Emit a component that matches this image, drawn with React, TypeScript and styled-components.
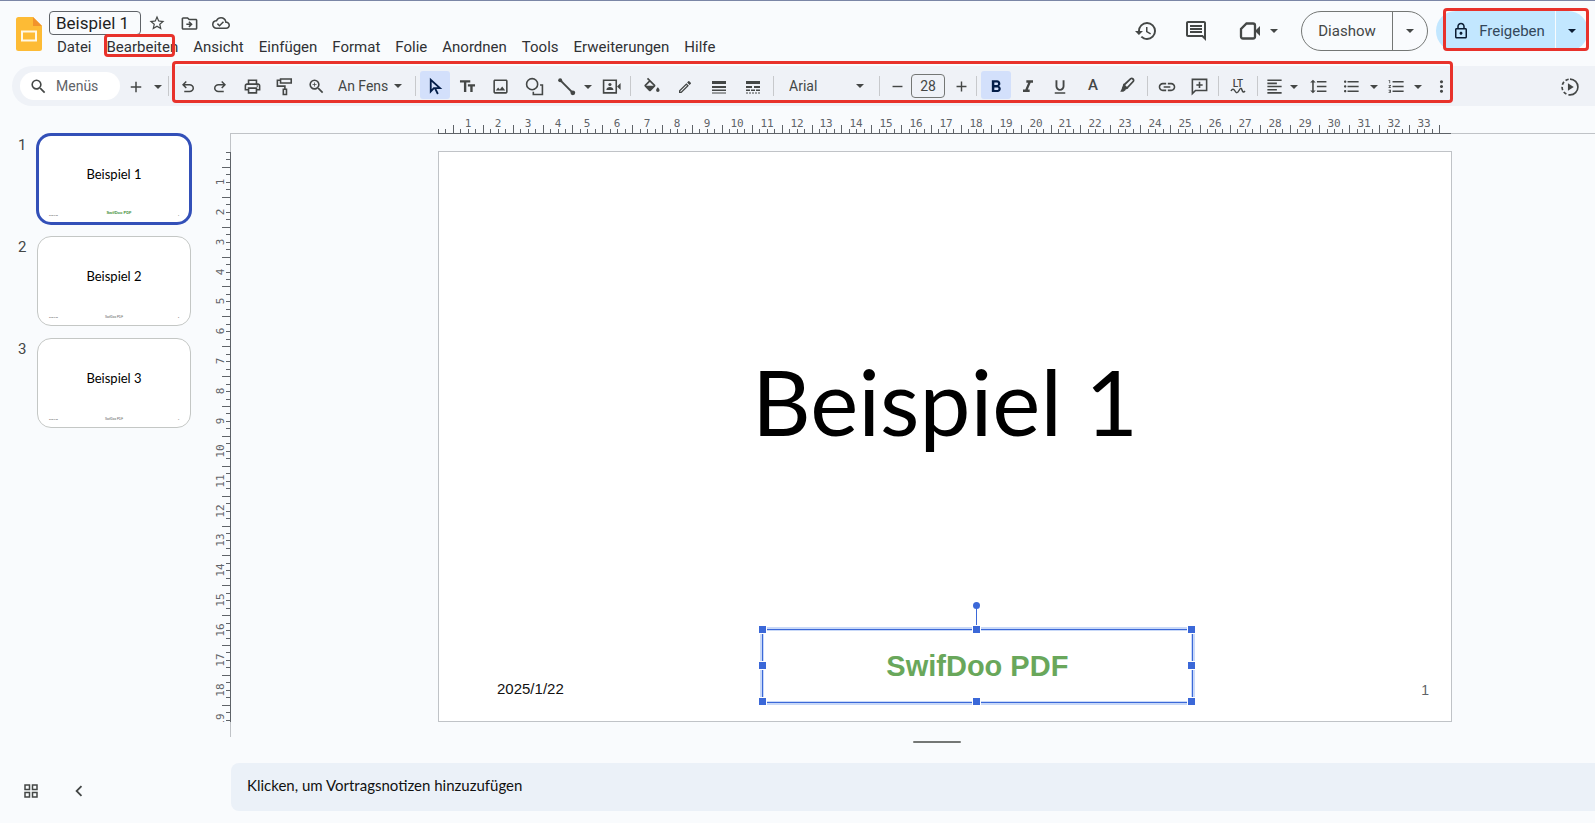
import React from 'react';
import styled, { createGlobalStyle, css } from 'styled-components';
import {
  MdStarBorder, MdOutlineDriveFileMove, MdOutlineCloudDone, MdHistory, MdOutlineInsertComment,
  MdOutlinePrint, MdZoomIn, MdOutlineImage, MdOutlineEdit, MdFormatItalic, MdFormatUnderlined,
  MdFormatBold, MdLink, MdFormatAlignLeft, MdFormatLineSpacing, MdFormatListBulleted,
  MdFormatListNumbered, MdMoreVert, MdSearch, MdAdd, MdRemove, MdOutlineLock, MdChevronLeft,
  MdGridView, MdTextFields,
} from 'react-icons/md';

const UI = 'Roboto, "Liberation Sans", sans-serif';
const DOC = 'Lato, "Open Sans", sans-serif';
const INK = '#444746';
const BLUE = '#3b68d8';

const Global = createGlobalStyle`
  *, *::before, *::after { box-sizing: border-box; }
  html, body { margin: 0; background: #f9fbfd; }
  body { font-family: ${UI}; color: ${INK}; }
  button, input, select { font: inherit; color: inherit; margin: 0; padding: 0; border: 0; background: none; }
  button { cursor: pointer; }
  svg { display: block; flex: none; }
`;

/* ---------- icons ---------- */

type SvgProps = { size?: number; children: React.ReactNode; box?: string };
const Stroke = ({ size = 19, children, box = '0 0 24 24' }: SvgProps) => (
  <svg width={size} height={size} viewBox={box} fill="none" stroke="currentColor" strokeWidth="2" aria-hidden="true">
    {children}
  </svg>
);
const Caret = () => (
  <svg width="8" height="4" viewBox="0 0 8 4" fill="currentColor" aria-hidden="true"><path d="M0 0h8L4 4z" /></svg>
);
const Undo = ({ flip = false }: { flip?: boolean }) => (
  <svg width="18" height="18" viewBox="0 -960 960 960" fill="currentColor" aria-hidden="true">
    <path
      transform={flip ? 'translate(960 0) scale(-1 1)' : undefined}
      d="M280-200v-80h284q63 0 109.500-40T720-420q0-60-46.500-100T564-560H312l104 104-56 56-200-200 200-200 56 56-104 104h252q97 0 167 63t70 157q0 94-70 157t-167 63H280Z"
    />
  </svg>
);
const PaintRoller = () => (
  <Stroke><path d="M7 2.500h13.500v5H7zM7 4H3v7.500h9.500V15M10.500 15.500h4V22h-4z" /></Stroke>
);
const Pointer = () => (
  <Stroke><path d="M6 3.500v14.800l4-4.300h7.600zM11 13.500l4 8" strokeWidth="2.300" /></Stroke>
);
const Shapes = () => (
  <Stroke><circle cx="9" cy="9" r="7" /><path d="M19 10h3v12H10.500v-3.500" /></Stroke>
);
const Line = () => (
  <Stroke>
    <path d="M4 4l16 16" strokeWidth="2.500" />
    <circle cx="4" cy="4" r="2.500" fill="currentColor" stroke="none" />
    <circle cx="20" cy="20" r="3" fill="currentColor" stroke="none" />
  </Stroke>
);
const Speaker = () => (
  <Stroke>
    <path d="M2 4h16v16H2z" />
    <circle cx="10" cy="9.500" r="2" fill="currentColor" stroke="none" />
    <path d="M5.500 16.500c0-5 9-5 9 0zM19 12l4.500-4.500v9z" fill="currentColor" stroke="none" />
  </Stroke>
);
const Bucket = () => (
  <svg width="19" height="19" viewBox="0 -1 24 24" fill="currentColor" aria-hidden="true">
    <path d="M16.560 8.940L7.620 0 6.210 1.410l2.380 2.380-5.150 5.150a1.490 1.490 0 000 2.120l5.500 5.500c.29.29.68.44 1.060.44s.77-.15 1.060-.44l5.500-5.500c.59-.58.59-1.530 0-2.120zM5.210 10L10 5.210 14.790 10zM20 12s-2.200 2.300-2.200 3.800a2.200 2.200 0 004.400 0C22.200 14.300 20 12 20 12z" />
  </svg>
);
const Weight = () => (
  <svg width="14" height="14" viewBox="0 0 14 14" fill="currentColor" aria-hidden="true">
    <path d="M0 1h14v3H0zM0 6h14v2H0zM0 9.500h14V11H0zM0 12.500h14v1H0z" />
  </svg>
);
const Dashes = () => (
  <svg width="14" height="14" viewBox="0 0 14 14" fill="currentColor" aria-hidden="true">
    <path d="M0 1h14v3H0zM0 6h6v2H0zM8 6h6v2H8zM0 9.500h4V11H0zM5 9.500h4V11H5zM10 9.500h4V11h-4zM0 12.500h2v1H0zM3 12.500h2v1H3zM6 12.500h2v1H6zM9 12.500h2v1H9zM12 12.500h2v1h-2z" />
  </svg>
);
const Marker = () => (
  <Stroke size={18}>
    <path d="M3 21l3-6 4 4-3 2z" fill="currentColor" stroke="none" />
    <path d="M8 12L17 3.500q1.500-1 3 .5t.5 3L12 16l-4 1.500-1.500-1.500z" strokeWidth="2.400" />
    <path d="M8 12l4 4-5 2z" fill="currentColor" />
  </Stroke>
);
const AddComment = () => (
  <Stroke><path d="M3 3h18v14H7l-4 4zM12 6v8M8 10h8" /></Stroke>
);
const Meet = () => (
  <Stroke size={24}>
    <path d="M8.500 4.500H15q2 0 2 2v11q0 2-2 2H5q-2 0-2-2V10z" strokeWidth="2.300" />
    <path d="M17 12l5-5v10z" fill="currentColor" stroke="none" />
  </Stroke>
);
const LanguageTool = () => (
  <svg width="18" height="18" viewBox="0 0 18 18" fill="none" stroke="currentColor" aria-hidden="true">
    <text x="9" y="9" textAnchor="middle" fontFamily={UI} fontWeight="500" fontSize="10" fill="currentColor" stroke="none">LT</text>
    <path d="M2 13q2-3.500 4 0t4-.5 3-.5 3 1" strokeWidth="1.500" />
  </svg>
);
const Motion = () => (
  <Stroke size={20}>
    <path d="M12 2.500a9.500 9.500 0 010 19" />
    <path d="M12 21.500a9.500 9.500 0 010-19" strokeDasharray="4 2.500" strokeDashoffset="2" />
    <path d="M9.500 7.500v9l7-4.500z" fill="currentColor" stroke="none" />
  </Stroke>
);
const Logo = () => (
  <svg width="26" height="34" viewBox="0 0 26 34" role="img" aria-label="Präsentationen">
    <path d="M2.500 0H17l9 9v22.500q0 2.500-2.500 2.500h-21Q0 34 0 31.500v-29Q0 0 2.500 0z" fill="#fdbb35" />
    <path d="M17 0l9 9h-9z" fill="#f2932b" />
    <path d="M6 14.500h14v9H6z" fill="none" stroke="#fff8e6" strokeWidth="2" />
  </svg>
);

/* ---------- header ---------- */

const Page = styled.div`
  display: flex;
  flex-direction: column;
  min-height: 100vh;
  overflow: hidden;
  border-top: 1px solid #7b86a6;
`;
const Header = styled.header`
  display: flex;
  height: 65px;
  padding: 10px 7px 0 16px;
`;
const LogoLink = styled.a`
  display: block;
  margin: 6px 7px 0 0;
`;
const TitleBlock = styled.div`
  display: flex;
  flex-direction: column;
  gap: 3px;
  flex: 1;
`;
const TitleRow = styled.div`
  display: flex;
  align-items: center;
`;
const TitleInput = styled.input`
  width: 92px;
  height: 24px;
  padding: 0 6px;
  border: 1px solid #5f6368;
  border-radius: 4px;
  font-size: 17px;
  color: #1f1f1f;
`;
const IconButton = styled.button<{ $w: number }>`
  display: flex;
  align-items: center;
  justify-content: center;
  width: ${p => p.$w}px;
  height: 24px;
`;
const MenuBar = styled.nav`
  display: flex;
  gap: 1px;
  padding-left: 1px;
`;
const MenuItem = styled.button`
  position: relative;
  padding: 0 7px;
  font-size: 15px;
  line-height: 18px;
  color: #303134;
`;
const Mark = styled.span<{ $inset: string }>`
  position: absolute;
  inset: ${p => p.$inset};
  border: 3px solid #e8322b;
  border-radius: 4px;
  pointer-events: none;
`;
const HeaderActions = styled.div`
  display: flex;
  align-items: center;
  height: 40px;
`;
const MeetButton = styled.button`
  display: flex;
  align-items: center;
  gap: 8px;
  margin: 0 23px 0 17px;
`;
const Split = styled.div<{ $tone: 'outline' | 'filled' }>`
  position: relative;
  display: flex;
  height: 40px;
  border-radius: 20px;
  font-size: 15px;
  ${p => p.$tone === 'outline'
    ? css`border: 1px solid #747775; margin-right: 8px;`
    : css`background: #c2e7ff; color: #0b1d33;`}
`;
const SplitMain = styled.button<{ $w: number; $lead?: boolean }>`
  display: flex;
  align-items: center;
  justify-content: center;
  gap: 9px;
  width: ${p => p.$w}px;
  padding-left: ${p => (p.$lead ? 6 : 0)}px;
`;
const SplitCaret = styled.button<{ $w: number; $line: string }>`
  display: flex;
  align-items: center;
  justify-content: center;
  width: ${p => p.$w}px;
  border-left: 1px solid ${p => p.$line};
`;
const ShareLabel = styled.span`
  color: #33475b;
`;

/* ---------- toolbar ---------- */

const Toolbar = styled.div`
  display: flex;
  align-items: flex-start;
  height: 40px;
  margin-left: 12px;
  padding: 5px 10px 0 8px;
  border-radius: 20px 0 0 20px;
  background: #eff2f7;
`;
const Search = styled.label`
  display: flex;
  align-items: center;
  gap: 8px;
  width: 100px;
  height: 28px;
  margin-top: 1px;
  padding-left: 9px;
  border-radius: 14px;
  background: #fff;
`;
const SearchInput = styled.input`
  width: 56px;
  font-size: 14px;
  &::placeholder { color: #5f6368; opacity: 1; }
`;
const Tools = styled.div`
  position: relative;
  display: flex;
  flex: none;
  gap: 2px;
  margin-left: 4px;
`;
const Tool = styled.button<{ $w?: number; $active?: boolean }>`
  display: flex;
  align-items: center;
  justify-content: center;
  width: ${p => p.$w ?? 30}px;
  height: 28px;
  padding-top: 3px;
  border-radius: 3px;
  ${p => p.$active && css`background: #d3e0fb; color: #041e49;`}
`;
const Stepper = styled.div`
  display: flex;
  ${Tool}:last-child { padding-left: 6px; }
`;
const Divider = styled.span<{ $lead?: boolean }>`
  width: 1px;
  height: 20px;
  margin: 5px ${p => (p.$lead ? 0 : 2)}px 0 ${p => (p.$lead ? 4 : 2)}px;
  background: #c7c9cc;
`;
const Picker = styled.label<{ $pad: string }>`
  display: flex;
  align-items: center;
  gap: 2px;
  height: 28px;
  padding: ${p => p.$pad};
  font-size: 14px;
`;
const PickerSelect = styled.select<{ $w: number }>`
  appearance: none;
  width: ${p => p.$w}px;
  overflow: hidden;
  white-space: nowrap;
  text-overflow: clip;
  outline: 0;
`;
const CaretCell = styled.span`
  display: flex;
  justify-content: center;
  width: 16px;
`;
const SizeInput = styled.input`
  width: 34px;
  height: 24px;
  margin-top: 3px;
  border: 1px solid #747775;
  border-radius: 4px;
  font-size: 14px;
  text-align: center;
`;
const LetterA = styled.span`
  height: 20px;
  font-size: 15px;
  font-weight: 500;
  line-height: 16px;
`;
const Raised = styled.span`
  height: 22px;
`;
const Spacer = styled.span`
  flex: 1;
`;

/* ---------- workspace ---------- */

const Workspace = styled.div`
  display: grid;
  grid-template-columns: 206px 24px minmax(0, 1fr);
  grid-template-rows: 28px auto;
  flex: 1;
`;
const Film = styled.ol`
  grid-row: 1 / 3;
  display: flex;
  flex-direction: column;
  gap: 12px;
  margin: 0;
  padding: 28px 0 0 16px;
  list-style: none;
`;
const FilmItem = styled.li`
  display: flex;
`;
const FilmNo = styled.span`
  width: 21px;
  padding-left: 2px;
  font-size: 15px;
  line-height: 22px;
`;
const Thumb = styled.button<{ $on?: boolean }>`
  display: flex;
  flex-direction: column;
  justify-content: space-between;
  width: 154px;
  height: 90px;
  padding: 31px 11px 2px;
  border: 1px solid #c4c7c5;
  border-radius: 14px;
  background: #fff;
  color: #000;
  ${p => p.$on && css`border: 2px solid #3350b8; box-shadow: 0 0 0 1px #3350b8; padding: 30px 10px 1px;`}
`;
const ThumbTitle = styled.span`
  width: 100%;
  font: 13px/17px ${DOC};
  text-align: center;
`;
const ThumbFoot = styled.span`
  display: grid;
  grid-template-columns: 1fr auto 1fr;
  align-items: center;
  width: 100%;
  height: 12px;
  font: 2px/8px "Liberation Sans", sans-serif;
  color: #555;
  text-align: left;
`;
const ThumbBrand = styled.span<{ $on?: boolean }>`
  ${p => p.$on
    ? css`margin: 0 0 4px 10px; font-size: 4px; font-weight: 700; color: #3f8f3a;`
    : css`font-size: 3px;`}
`;
const ThumbNo = styled.span`
  text-align: right;
`;

const TopRuler = styled.div`
  grid-column: 3;
  padding: 10px 143px 0 208px;
  border-bottom: 1px solid #c0c3c7;
  svg { width: 100%; height: 18px; overflow: visible; }
`;
const SideRuler = styled.div`
  grid-column: 2;
  padding: 18px 0 15px;
  svg { width: 25px; height: 100%; position: relative; z-index: 1; }
`;
const Canvas = styled.main`
  grid-column: 3;
  padding: 17px 143px 15px 207px;
  border-left: 1px solid #c0c3c7;
`;
const Slide = styled.section`
  position: relative;
  aspect-ratio: 1014 / 571;
  border: 1px solid #c0c3c7;
  background: #fff;
`;
const SlideTitle = styled.h1`
  position: absolute;
  inset: 35% 0 auto;
  margin: 0;
  font: 400 91px/100px ${DOC};
  color: #000;
  text-align: center;
`;
const SlideDate = styled.span`
  position: absolute;
  left: 58px;
  bottom: 23px;
  font: 15px/18px "Liberation Sans", sans-serif;
  color: #111;
`;
const SlideNo = styled.span`
  position: absolute;
  right: 22px;
  bottom: 22px;
  font: 14px/18px "Liberation Sans", sans-serif;
  color: #5f6368;
`;
const Selected = styled.div`
  position: absolute;
  left: 32%;
  right: 26%;
  bottom: 18px;
  height: 74px;
  margin: 0 -5px 0 -1px;
  display: flex;
  align-items: center;
  justify-content: center;
  border: 1px solid ${BLUE};
  box-shadow: 0 0 0 2px #c9d9f8, inset 0 0 0 1px #c9d9f8;
  font: 700 29px/32px "Liberation Sans", sans-serif;
  color: #69a75b;
`;
const Handle = styled.i<{ $x: number; $y: number }>`
  position: absolute;
  left: ${p => p.$x}%;
  top: ${p => p.$y}%;
  width: 9px;
  height: 9px;
  margin: -5px;
  border: 1px solid #fff;
  background: ${BLUE};
`;
const Stem = styled.i`
  position: absolute;
  left: 50%;
  top: -25px;
  width: 1px;
  height: 20px;
  margin-left: -1px;
  background: ${BLUE};
  &::before {
    content: '';
    position: absolute;
    left: -3px;
    top: -3px;
    width: 7px;
    height: 7px;
    border-radius: 50%;
    background: ${BLUE};
  }
`;
const Bottom = styled.footer`
  display: grid;
  grid-template-columns: 231px minmax(0, 1fr);
  padding-bottom: 12px;
`;
const Grip = styled.div`
  grid-column: 2;
  width: 48px;
  height: 2px;
  margin: 4px 0 20px 50%;
  border-radius: 1px;
  background: #747775;
`;
const BottomLeft = styled.div`
  display: flex;
  align-items: center;
  padding: 8px 0 0 7px;
`;
const NotesInput = styled.input`
  width: 100%;
  height: 48px;
  padding: 0 16px 5px;
  border-radius: 8px 0 0 8px;
  background: #ebf1f8;
  font: 15px ${DOC};
  &::placeholder { color: #111; opacity: 1; }
`;

/* ---------- rulers ---------- */

const CM = 29.88;
const ticks = (n: number) => Array.from({ length: n }, (_, i) => i);

const HorizontalRuler = () => (
  <svg viewBox="0 0 1014 18" aria-hidden="true">
    <g stroke="#5f6368" shapeRendering="crispEdges">
      <path d="M0 17.500h1013" />
      {ticks(135).map(i => (
        <path key={i} d={`M${Math.round(i * CM / 4) + 0.5} ${i % 4 === 2 ? 9 : 13}V18`} />
      ))}
    </g>
    <g fontFamily='"DejaVu Sans Mono", monospace' fontSize="11" fill="#5f6368" textAnchor="middle">
      {ticks(33).map(i => <text key={i} x={Math.round((i + 1) * CM)} y="11">{i + 1}</text>)}
    </g>
  </svg>
);
const VerticalRuler = () => (
  <svg viewBox="0 0 25 570" aria-hidden="true">
    <g stroke="#5f6368" shapeRendering="crispEdges">
      <path d="M24.500 0V570" />
      {ticks(77).map(i => (
        <path key={i} d={`M${i % 4 === 2 ? 16 : 20} ${Math.round(i * CM / 4) + 0.5}H25`} />
      ))}
    </g>
    <g fontFamily='"DejaVu Sans Mono", monospace' fontSize="11" fill="#5f6368" textAnchor="middle">
      {ticks(19).map(i => (
        <text key={i} transform={`translate(18 ${Math.round((i + 1) * CM)}) rotate(-90)`}>{i + 1}</text>
      ))}
    </g>
  </svg>
);

const MENUS = ['Datei', 'Bearbeiten', 'Ansicht', 'Einfügen', 'Format', 'Folie', 'Anordnen', 'Tools', 'Erweiterungen', 'Hilfe'];
const HANDLES = [[0, 0], [50, 0], [100, 0], [0, 50], [100, 50], [0, 100], [50, 100], [100, 100]];

export default function App() {
  return (
    <Page>
      <Global />
      <Header>
        <LogoLink href="#"><Logo /></LogoLink>
        <TitleBlock>
          <TitleRow>
            <TitleInput aria-label="Titel" defaultValue="Beispiel 1" />
            <IconButton $w={32} aria-label="Markieren"><MdStarBorder size={18} /></IconButton>
            <IconButton $w={32} aria-label="Verschieben"><MdOutlineDriveFileMove size={19} /></IconButton>
            <IconButton $w={32} aria-label="Status"><MdOutlineCloudDone size={18} /></IconButton>
          </TitleRow>
          <MenuBar>
            {MENUS.map(m => (
              <MenuItem key={m}>{m}{m === 'Bearbeiten' && <Mark $inset="-4px 10px -1px 4px" />}</MenuItem>
            ))}
          </MenuBar>
        </TitleBlock>
        <HeaderActions>
          <IconButton $w={50} aria-label="Verlauf"><MdHistory size={24} /></IconButton>
          <IconButton $w={50} aria-label="Kommentare"><MdOutlineInsertComment size={24} /></IconButton>
          <MeetButton aria-label="Meet"><Meet /><Caret /></MeetButton>
          <Split $tone="outline">
            <SplitMain $w={90}>Diashow</SplitMain>
            <SplitCaret $w={35} $line="#747775" aria-label="Diashow-Optionen"><Caret /></SplitCaret>
          </Split>
          <Split $tone="filled">
            <SplitMain $w={119} $lead><MdOutlineLock size={18} /><ShareLabel>Freigeben</ShareLabel></SplitMain>
            <SplitCaret $w={33} $line="#f9fbfd" aria-label="Freigabeoptionen"><Caret /></SplitCaret>
            <Mark $inset="-3px -1px 0 7px" />
          </Split>
        </HeaderActions>
      </Header>

      <Toolbar>
        <Search><MdSearch size={19} /><SearchInput aria-label="Menüs" placeholder="Menüs" /></Search>
        <Tool $w={32} aria-label="Neue Folie"><MdAdd size={18} /></Tool>
        <Tool $w={12} aria-label="Layouts"><Caret /></Tool>
        <Divider $lead />
        <Tools>
          <Tool aria-label="Rückgängig"><Undo /></Tool>
          <Tool aria-label="Wiederholen"><Undo flip /></Tool>
          <Tool aria-label="Drucken"><MdOutlinePrint size={19} /></Tool>
          <Tool aria-label="Format übertragen"><PaintRoller /></Tool>
          <Tool aria-label="Zoom"><MdZoomIn size={19} /></Tool>
          <Picker $pad="2px 5px 0 5px">
            <PickerSelect $w={50} aria-label="Zoomstufe"><option>An Fenster anpassen</option></PickerSelect>
            <CaretCell><Caret /></CaretCell>
          </Picker>
          <Divider />
          <Tool $active aria-label="Auswählen"><Pointer /></Tool>
          <Tool aria-label="Textfeld"><MdTextFields size={19} /></Tool>
          <Tool $w={32} aria-label="Bild"><MdOutlineImage size={19} /></Tool>
          <Tool $w={32} aria-label="Form"><Shapes /></Tool>
          <Tool $w={28} aria-label="Linie"><Line /></Tool>
          <Tool $w={12} aria-label="Linienarten"><Caret /></Tool>
          <Tool aria-label="Video"><Speaker /></Tool>
          <Divider />
          <Tool $w={32} aria-label="Füllfarbe"><Bucket /></Tool>
          <Tool $w={32} aria-label="Rahmenfarbe"><MdOutlineEdit size={16} /></Tool>
          <Tool $w={32} aria-label="Rahmenstärke"><Weight /></Tool>
          <Tool $w={32} aria-label="Rahmenstrich"><Dashes /></Tool>
          <Divider />
          <Picker $pad="2px 7px 0 11px">
            <PickerSelect $w={61} aria-label="Schriftart"><option>Arial</option></PickerSelect>
            <CaretCell><Caret /></CaretCell>
          </Picker>
          <Divider />
          <Stepper>
            <Tool $w={27} aria-label="Kleiner"><MdRemove size={17} /></Tool>
            <SizeInput aria-label="Schriftgröße" defaultValue="28" />
            <Tool $w={27} aria-label="Größer"><MdAdd size={17} /></Tool>
          </Stepper>
          <Divider />
          <Tool $active aria-label="Fett"><MdFormatBold size={20} /></Tool>
          <Tool aria-label="Kursiv"><MdFormatItalic size={20} /></Tool>
          <Tool aria-label="Unterstrichen"><MdFormatUnderlined size={18} /></Tool>
          <Tool $w={32} aria-label="Textfarbe"><LetterA>A</LetterA></Tool>
          <Tool $w={32} aria-label="Markierfarbe"><Raised><Marker /></Raised></Tool>
          <Divider />
          <Tool aria-label="Link"><MdLink size={20} /></Tool>
          <Tool aria-label="Kommentar"><AddComment /></Tool>
          <Divider />
          <Tool aria-label="LanguageTool"><LanguageTool /></Tool>
          <Divider />
          <Tool $w={24} aria-label="Ausrichten"><MdFormatAlignLeft size={19} /></Tool>
          <Tool $w={12} aria-label="Ausrichtungen"><Caret /></Tool>
          <Tool $w={32} aria-label="Zeilenabstand"><MdFormatLineSpacing size={19} /></Tool>
          <Tool aria-label="Aufzählung"><MdFormatListBulleted size={19} /></Tool>
          <Tool $w={12} aria-label="Aufzählungsarten"><Caret /></Tool>
          <Tool $w={28} aria-label="Nummerierung"><MdFormatListNumbered size={19} /></Tool>
          <Tool $w={12} aria-label="Nummerierungsarten"><Caret /></Tool>
          <Tool aria-label="Mehr"><MdMoreVert size={19} /></Tool>
          <Mark $inset="-10px 3px -4px -1px" />
        </Tools>
        <Spacer />
        <Tool aria-label="Bewegung"><Motion /></Tool>
      </Toolbar>

      <Workspace>
        <Film>
          {[1, 2, 3].map(n => (
            <FilmItem key={n}>
              <FilmNo>{n}</FilmNo>
              <Thumb $on={n === 1}>
                <ThumbTitle>Beispiel {n}</ThumbTitle>
                <ThumbFoot>
                  <span>2025/1/22</span>
                  <ThumbBrand $on={n === 1}>SwifDoo PDF</ThumbBrand>
                  <ThumbNo>{n}</ThumbNo>
                </ThumbFoot>
              </Thumb>
            </FilmItem>
          ))}
        </Film>
        <TopRuler><HorizontalRuler /></TopRuler>
        <SideRuler><VerticalRuler /></SideRuler>
        <Canvas>
          <Slide>
            <SlideTitle>Beispiel 1</SlideTitle>
            <SlideDate>2025/1/22</SlideDate>
            <Selected>
              SwifDoo PDF
              <Stem />
              {HANDLES.map(([x, y]) => <Handle key={`${x}-${y}`} $x={x} $y={y} />)}
            </Selected>
            <SlideNo>1</SlideNo>
          </Slide>
        </Canvas>
      </Workspace>

      <Bottom>
        <Grip />
        <BottomLeft>
          <IconButton $w={48} aria-label="Rasteransicht"><MdGridView size={18} /></IconButton>
          <IconButton $w={48} aria-label="Leiste ausblenden"><MdChevronLeft size={22} /></IconButton>
        </BottomLeft>
        <NotesInput aria-label="Vortragsnotizen" placeholder="Klicken, um Vortragsnotizen hinzuzufügen" />
      </Bottom>
    </Page>
  );
}
